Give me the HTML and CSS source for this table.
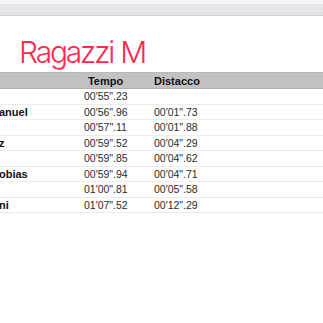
FILE: index.html
```html
<!DOCTYPE html>
<html lang="it">
<head>
<meta charset="utf-8">
<title>Ragazzi M</title>
<link rel="stylesheet" href="styles.css">
</head>
<body>
<div class="toolbar">
  <div class="toolbar-top"></div>
  <div class="toolbar-bar"></div>
</div>
<div class="title-area">
  <h1 class="title">Ragazzi M</h1>
</div>
<div class="results">
  <div class="row head">
    <span class="name"></span>
    <span class="time">Tempo</span>
    <span class="spacer"></span>
    <span class="time">Distacco</span>
  </div>
  <div class="row">
    <span class="name"></span>
    <span class="time">00'55".23</span>
    <span class="spacer"></span>
    <span class="time"></span>
  </div>
  <div class="row">
    <span class="name">anuel</span>
    <span class="time">00'56".96</span>
    <span class="spacer"></span>
    <span class="time">00'01".73</span>
  </div>
  <div class="row">
    <span class="name"></span>
    <span class="time">00'57".11</span>
    <span class="spacer"></span>
    <span class="time">00'01".88</span>
  </div>
  <div class="row">
    <span class="name">z</span>
    <span class="time">00'59".52</span>
    <span class="spacer"></span>
    <span class="time">00'04".29</span>
  </div>
  <div class="row">
    <span class="name"></span>
    <span class="time">00'59".85</span>
    <span class="spacer"></span>
    <span class="time">00'04".62</span>
  </div>
  <div class="row">
    <span class="name">obias</span>
    <span class="time">00'59".94</span>
    <span class="spacer"></span>
    <span class="time">00'04".71</span>
  </div>
  <div class="row">
    <span class="name"></span>
    <span class="time">01'00".81</span>
    <span class="spacer"></span>
    <span class="time">00'05".58</span>
  </div>
  <div class="row">
    <span class="name">ni</span>
    <span class="time">01'07".52</span>
    <span class="spacer"></span>
    <span class="time">00'12".29</span>
  </div>
</div>
</body>
</html>
```

FILE: styles.css
```css
html, body {
  margin: 0;
  padding: 0;
  background: #ffffff;
  overflow: hidden;
}

body {
  width: 323px;
  height: 323px;
  font-family: "Liberation Sans", Arial, sans-serif;
}

.toolbar {
  display: flex;
  flex-direction: column;
}

.toolbar-top {
  height: 4px;
  background: #f4f4f6;
  border-bottom: 1px solid #e6e6ea;
}

.toolbar-bar {
  height: 10px;
  background: linear-gradient(#e8e8ec, #e0e0e5);
  border-bottom: 1px solid #cfcfd4;
}

.title-area {
  height: 56px;
  display: flex;
  align-items: flex-end;
  padding-left: 19px;
}

.title {
  margin: 0 0 0 0;
  font-family: Inter, "Open Sans", sans-serif;
  font-weight: 300;
  font-size: 30px;
  line-height: 40px;
  letter-spacing: -2.2px;
  word-spacing: 1px;
  color: #ff2a4e;
}

.results {
  margin-left: -1px;
  display: flex;
  flex-direction: column;
}

.row {
  display: grid;
  grid-template-columns: 85px 43px 27px 42px 1fr;
  height: 15.5px;
  box-sizing: border-box;
  border-bottom: 1px solid #ececec;
  align-items: center;
  font-size: 10.5px;
  color: #2a2a2a;
}

.row.head {
  height: 17px;
  background: #c2c2c2;
  border-top: 1px solid #b8b8b8;
  border-bottom: 1px solid #b0b0b0;
  font-weight: bold;
  color: #111111;
  font-size: 11px;
}

.name {
  font-weight: bold;
  color: #111111;
  white-space: nowrap;
  font-size: 11px;
}

.time {
  text-align: center;
  white-space: nowrap;
}
```
